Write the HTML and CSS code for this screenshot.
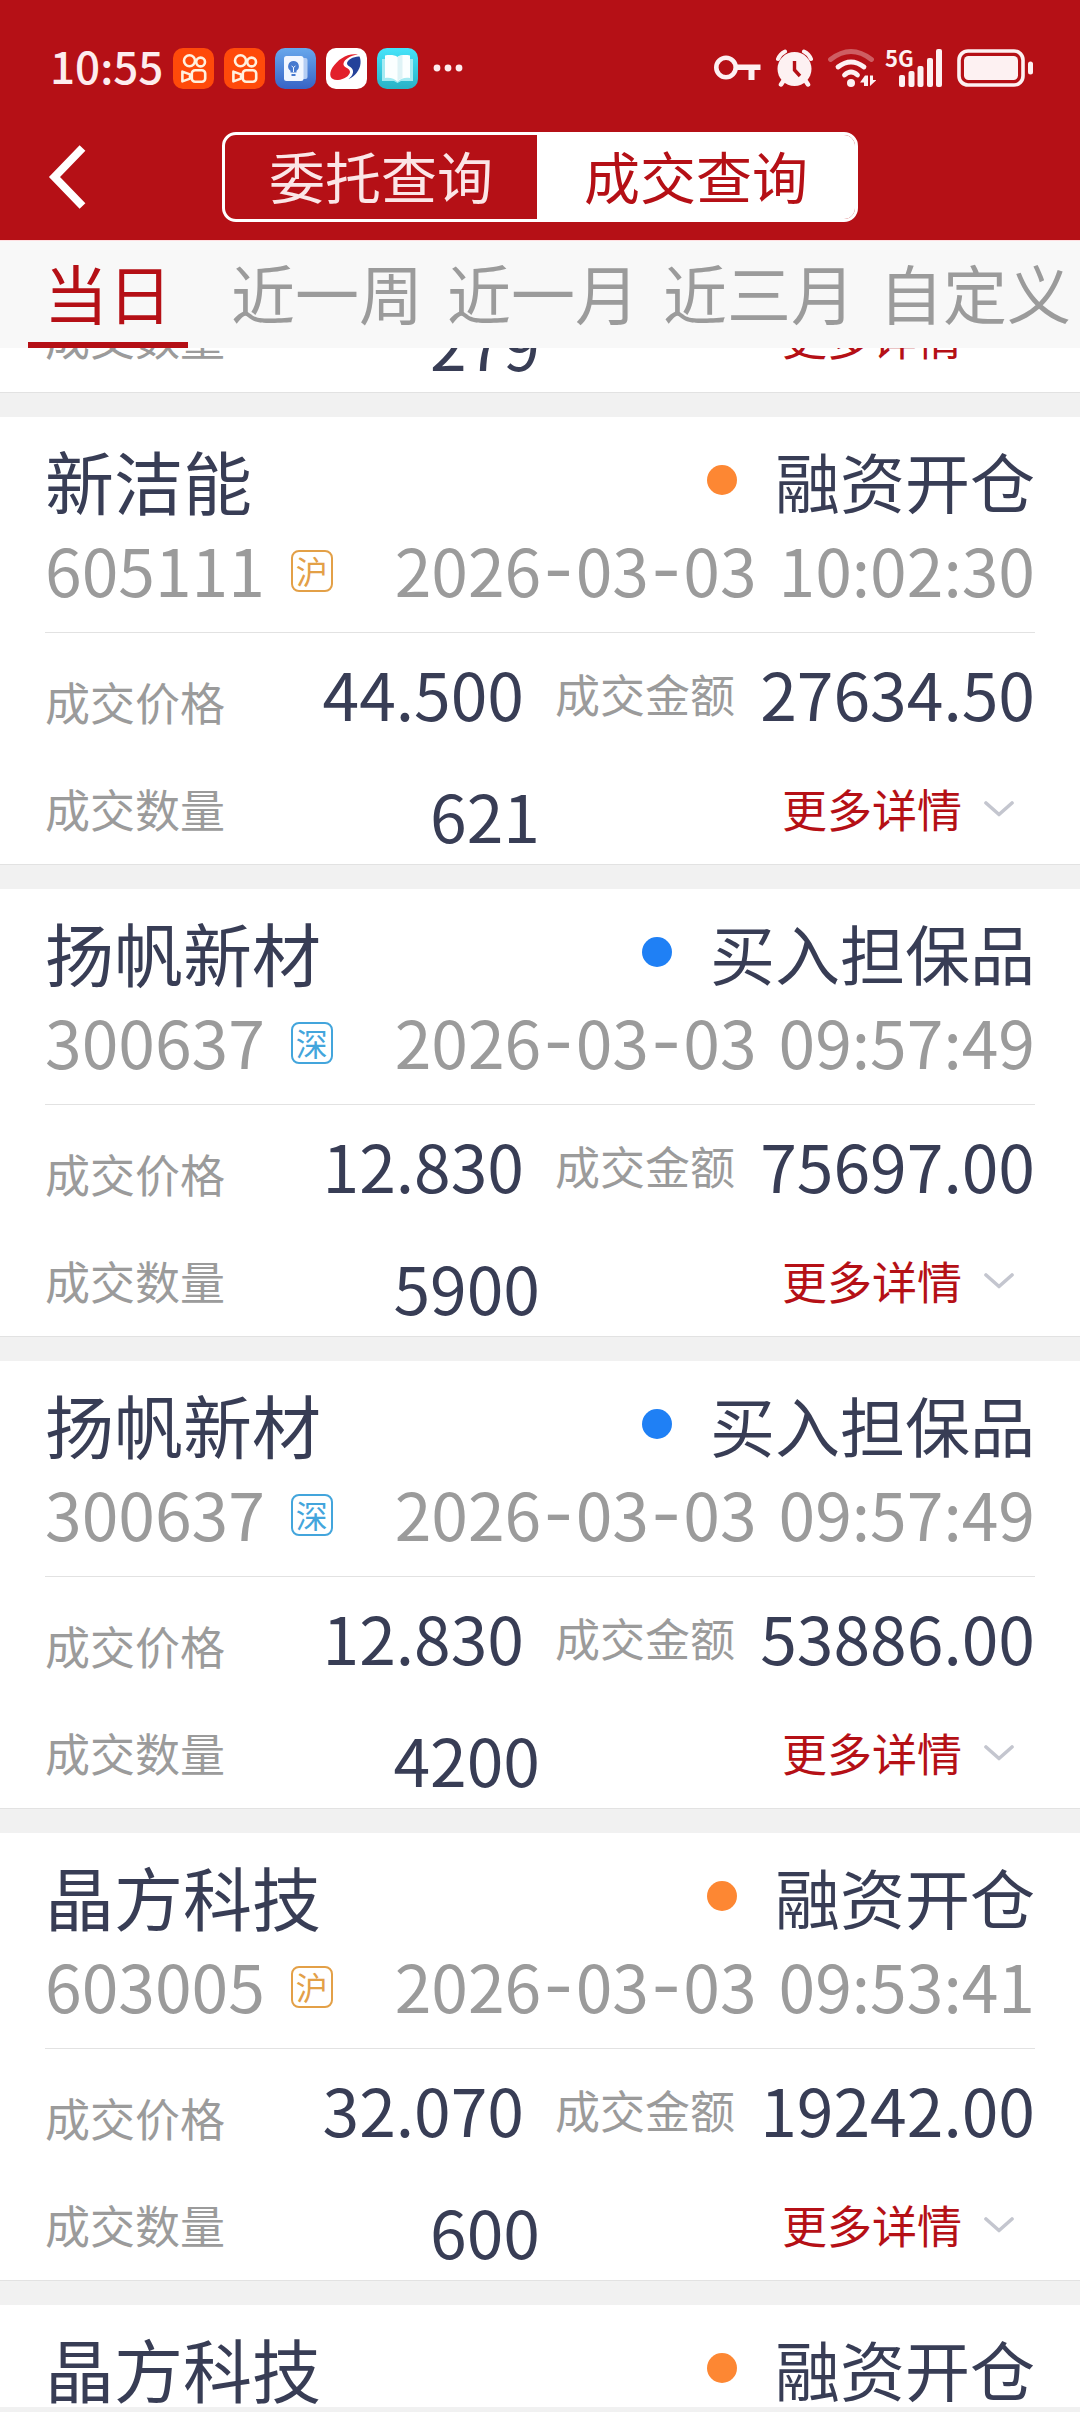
FILE: index.html
```html
<!DOCTYPE html>
<html lang="zh-CN">
<head>
<meta charset="utf-8">
<meta name="viewport" content="width=device-width, initial-scale=1">
<title>成交查询</title>
<link rel="stylesheet" href="styles.css">
</head>
<body>
<svg class="defs" width="0" height="0" aria-hidden="true">
  <defs>
    <linearGradient id="note-bg" x1="0" y1="0" x2="0" y2="1"><stop offset="0" stop-color="#68a8ec"/><stop offset="1" stop-color="#3763c6"/></linearGradient>
    <linearGradient id="book-bg" x1="0" y1="0" x2="0" y2="1"><stop offset="0" stop-color="#46e4fa"/><stop offset="1" stop-color="#29b2c6"/></linearGradient>
    <symbol id="camera" viewBox="0 0 41 41">
      <rect width="41" height="41" rx="10" fill="#ff4a0a"/>
      <g fill="none" stroke="#fff1df" stroke-width="2.6" stroke-linejoin="round">
        <circle cx="16.5" cy="12.7" r="5.5"/><circle cx="27.6" cy="14" r="4.4"/>
        <rect x="18.8" y="22.2" width="13.4" height="11.6" rx="3.4"/>
        <path d="M9.4 23.6 17 26.4V30.600L9.400 33.400Z"/>
      </g>
    </symbol>
    <symbol id="chevron" viewBox="0 0 30 16"><path d="M2 2 15 13.500 28 2" fill="none" stroke="#c4c6cf" stroke-width="3.6" stroke-linecap="round" stroke-linejoin="round"/></symbol>
  </defs>
</svg>
<div class="screen">
  <header class="header">
    <div class="status">
      <span class="clock">10:55</span>
      <div class="apps">
        <svg class="app" aria-hidden="true"><use href="#camera"/></svg>
        <svg class="app" aria-hidden="true"><use href="#camera"/></svg>
        <svg class="app" viewBox="0 0 41 41" aria-hidden="true">
          <rect width="41" height="41" rx="10" fill="url(#note-bg)"/>
          <path d="M28 10h2.500a2 2 0 0 1 2 2v17a2 2 0 0 1-2 2H28z" fill="#b4cdf4"/>
          <rect x="9" y="8" width="19.500" height="25" rx="2.500" fill="#f1f6ff"/>
          <path d="M18.500 13a5.300 5.300 0 0 0-3 9.700V24.500h6v-1.800a5.300 5.300 0 0 0-3-9.700zM16.500 26h4v2h-4z" fill="#4679cf"/>
          <path d="M16.600 18l1.900 1.500 1.900-1.500M18.500 19.500V24" fill="none" stroke="#f1f6ff" stroke-width="1"/>
        </svg>
        <svg class="app" viewBox="0 0 41 41" aria-hidden="true">
          <rect width="41" height="41" rx="10" fill="#fff"/>
          <path d="M32 6.500C22 4.500 12 11 6.500 19.500 2 27 4.500 32.500 12 32c6-.5 11.500-4 12-8 .3-4-7.500-4.500-6.500-8.500C18.300 11.500 24 7.500 32 6.500z" fill="#e2202b"/>
          <path d="M33.500 8.500C28 8 21 12 21 15.500c0 3 7 3.500 6 9-.4 2.500-2 4.500-4.500 6.500C29 28.500 34 22 34.500 15.500c.2-3-.1-5-1-7z" fill="#24429a"/>
        </svg>
        <svg class="app" viewBox="0 0 41 41" aria-hidden="true">
          <rect width="41" height="41" rx="10" fill="url(#book-bg)"/>
          <path d="M5 11h31v22H24l-3.500 2-3.500-2H5z" fill="#a4eaf2"/>
          <path d="M8 7.500c5-1 10-.5 12.500 1.500 2.500-2 7.500-2.500 12.500-1.500V30c-5-.8-9.500.5-12.500 3.500C17.500 30.500 13 29.200 8 30z" fill="#fbffff"/>
          <path d="M20.500 9v24.500c1.500-1.800 3-2.700 5-3.200V7.200c-2 .2-3.800.8-5 1.800z" fill="#dff3f6"/>
        </svg>
      </div>
      <svg class="dots" viewBox="0 0 30 8" aria-hidden="true"><g fill="#fdecee"><circle cx="4" cy="4" r="3.400"/><circle cx="15" cy="4" r="3.400"/><circle cx="26" cy="4" r="3.400"/></g></svg>
      <div class="system">
        <svg width="47" height="26" viewBox="0 0 47 26" aria-label="VPN"><circle cx="12" cy="12.500" r="9.700" fill="none" stroke="#fdf1f2" stroke-width="4.600"/><path d="M23 9.500H46.500V15H40.500V25H34.500V15H23z" fill="#fdf1f2"/></svg>
        <svg width="37" height="38" viewBox="0 0 37 38" aria-label="闹钟"><g stroke="#fdf1f2" fill="none" stroke-linecap="round"><path d="M2 10Q4 5 9 2.500M35 10Q33 5 28 2.500" stroke-width="4"/><path d="M8 31 5 35.500M29 31 32 35.500" stroke-width="4.500"/></g><circle cx="18.500" cy="20" r="17" fill="#fdf1f2"/><path d="M18.500 12V21L24 27" fill="none" stroke="#b51016" stroke-width="3.400"/></svg>
        <svg width="48" height="38" viewBox="0 0 48 38" aria-label="无线网络"><g fill="none" stroke="#fdf1f2" stroke-width="4.800" stroke-linecap="round"><path d="M2.500 10.500Q23 -5.500 43.500 10.500" opacity=".35"/><path d="M10 18Q23 8 36 18"/><path d="M16.500 26Q23 20 29.500 26"/></g><circle cx="23" cy="34" r="4" fill="#fdf1f2"/><path d="M37 26.500h3V37H36V33.500H32zM42 37V26.500H45V31H48.500z" fill="#fdf1f2"/></svg>
        <svg class="signal" width="56" height="38" viewBox="0 0 56 38" aria-label="信号"><text x="-1" y="18">5G</text><g fill="#fdf1f2"><rect x="13" y="26" width="6" height="12" rx="2"/><rect x="22.500" y="22" width="6" height="16" rx="2"/><rect x="31.500" y="17" width="6" height="21" rx="2"/><rect x="41" y="9" width="6" height="29" rx="2"/><rect x="50" y="0" width="6" height="38" rx="2"/></g></svg>
        <svg width="76" height="38" viewBox="0 0 76 38" aria-label="电量"><rect x="2" y="2" width="64" height="34" rx="9" fill="none" stroke="#fdf1f2" stroke-width="3.600"/><rect x="7" y="7" width="54" height="24" rx="4.500" fill="#fdf1f2"/><rect x="71" y="12.500" width="5" height="13" rx="2.500" fill="#fdf1f2"/></svg>
      </div>
    </div>
    <div class="navbar">
      <button class="back" type="button" aria-label="返回"><svg width="38" height="64" viewBox="0 0 38 64"><path d="M34.500 3 6.500 32 34.500 61" fill="none" stroke="#fff" stroke-width="8"/></svg></button>
      <div class="segments">
        <button class="segment" type="button">委托查询</button>
        <button class="segment segment-on" type="button">成交查询</button>
      </div>
    </div>
  </header>
  <nav class="tabs">
    <button class="tab tab-on" type="button">当日</button>
    <button class="tab" type="button">近一周</button>
    <button class="tab" type="button">近一月</button>
    <button class="tab" type="button">近三月</button>
    <button class="tab" type="button">自定义</button>
  </nav>
  <main class="list">
    <article class="card card-scrolled">
      <div class="row row-count">
        <div class="pair"><span class="label">成交数量</span><span class="value">279</span></div>
        <button class="more" type="button">更多详情<svg class="chevron"><use href="#chevron"/></svg></button>
      </div>
    </article>
    <article class="card">
      <div class="head">
        <div class="line"><h2 class="name">新洁能</h2><span class="kind kind-margin">融资开仓</span></div>
        <div class="line meta"><span>605111</span><span class="market market-sh">沪</span><time class="time"><span>2026<i>-</i>03<i>-</i>03</span> <span>10:02:30</span></time></div>
      </div>
      <div class="row row-price">
        <div class="pair"><span class="label">成交价格</span><span class="value">44.500</span></div>
        <div class="pair"><span class="label">成交金额</span><span class="value">27634.50</span></div>
      </div>
      <div class="row row-count">
        <div class="pair"><span class="label">成交数量</span><span class="value">621</span></div>
        <button class="more" type="button">更多详情<svg class="chevron"><use href="#chevron"/></svg></button>
      </div>
    </article>
    <article class="card">
      <div class="head">
        <div class="line"><h2 class="name">扬帆新材</h2><span class="kind kind-buy">买入担保品</span></div>
        <div class="line meta"><span>300637</span><span class="market market-sz">深</span><time class="time"><span>2026<i>-</i>03<i>-</i>03</span> <span>09:57:49</span></time></div>
      </div>
      <div class="row row-price">
        <div class="pair"><span class="label">成交价格</span><span class="value">12.830</span></div>
        <div class="pair"><span class="label">成交金额</span><span class="value">75697.00</span></div>
      </div>
      <div class="row row-count">
        <div class="pair"><span class="label">成交数量</span><span class="value">5900</span></div>
        <button class="more" type="button">更多详情<svg class="chevron"><use href="#chevron"/></svg></button>
      </div>
    </article>
    <article class="card">
      <div class="head">
        <div class="line"><h2 class="name">扬帆新材</h2><span class="kind kind-buy">买入担保品</span></div>
        <div class="line meta"><span>300637</span><span class="market market-sz">深</span><time class="time"><span>2026<i>-</i>03<i>-</i>03</span> <span>09:57:49</span></time></div>
      </div>
      <div class="row row-price">
        <div class="pair"><span class="label">成交价格</span><span class="value">12.830</span></div>
        <div class="pair"><span class="label">成交金额</span><span class="value">53886.00</span></div>
      </div>
      <div class="row row-count">
        <div class="pair"><span class="label">成交数量</span><span class="value">4200</span></div>
        <button class="more" type="button">更多详情<svg class="chevron"><use href="#chevron"/></svg></button>
      </div>
    </article>
    <article class="card">
      <div class="head">
        <div class="line"><h2 class="name">晶方科技</h2><span class="kind kind-margin">融资开仓</span></div>
        <div class="line meta"><span>603005</span><span class="market market-sh">沪</span><time class="time"><span>2026<i>-</i>03<i>-</i>03</span> <span>09:53:41</span></time></div>
      </div>
      <div class="row row-price">
        <div class="pair"><span class="label">成交价格</span><span class="value">32.070</span></div>
        <div class="pair"><span class="label">成交金额</span><span class="value">19242.00</span></div>
      </div>
      <div class="row row-count">
        <div class="pair"><span class="label">成交数量</span><span class="value">600</span></div>
        <button class="more" type="button">更多详情<svg class="chevron"><use href="#chevron"/></svg></button>
      </div>
    </article>
    <article class="card">
      <div class="head">
        <div class="line"><h2 class="name">晶方科技</h2><span class="kind kind-margin">融资开仓</span></div>
      </div>
    </article>
  </main>
</div>
</body>
</html>
```
FILE: styles.css
```css
* { box-sizing: border-box; }

body {
  margin: 0;
  background: #f1f1f1;
  color: #383d55;
  font-family: "Noto Sans CJK SC", "Noto Sans", sans-serif;
}

button {
  margin: 0;
  padding: 0;
  border: 0;
  background: none;
  color: inherit;
  font-family: inherit;
}

svg { display: block; flex: none; }

.defs { position: absolute; }

.screen {
  display: flex;
  flex-direction: column;
  height: 100vh;
  padding-bottom: 5px;
}

/* Header */
.header {
  flex: none;
  background: #b51016;
  color: #fff;
}

.status {
  display: flex;
  align-items: center;
  height: 124px;
  padding: 12px 47px 0 50px;
}

.clock {
  width: 123px;
  padding-bottom: 6px;
  color: #fdecee;
  font-size: 44px;
  font-weight: 500;
  line-height: 56px;
}

.apps { display: flex; gap: 10px; }
.app { width: 41px; height: 41px; }
.dots { width: 30px; height: 8px; margin-left: 15px; }

.system {
  display: flex;
  align-items: center;
  gap: 15px;
  margin-left: auto;
}

.signal { margin-left: -5px; overflow: visible; }
.signal text {
  fill: #fdf1f2;
  font-family: "Noto Sans CJK SC", sans-serif;
  font-size: 22px;
  font-weight: 700;
}

.navbar {
  display: grid;
  grid-template-columns: 1fr 636px 1fr;
  align-items: center;
  height: 116px;
  padding-bottom: 10px;
}

.back { justify-self: start; margin-left: 48px; }

.segments {
  display: grid;
  grid-template-columns: 312px 1fr;
  height: 90px;
  border: 3px solid #fff;
  border-radius: 14px;
  overflow: hidden;
}

.segment {
  padding-bottom: 4px;
  color: #fbe6e7;
  font-size: 56px;
  line-height: 80px;
}

.segment-on { background: #fff; color: #b51016; }

/* Period tabs */
.tabs {
  position: relative;
  z-index: 1;
  flex: none;
  display: grid;
  grid-template-columns: repeat(5, 1fr);
  height: 108px;
  border-top: 1px solid #ffdfe1;
  background: #f8f8f8;
}

.tab {
  display: flex;
  flex-direction: column;
  align-items: center;
  justify-content: space-between;
  padding-left: 6px;
  color: #9b9b9b;
  font-size: 64px;
  line-height: 100px;
  white-space: nowrap;
}

.tab-on { padding-left: 0; color: #b51016; }
.tab-on::after {
  content: "";
  width: 160px;
  height: 6px;
  background: #b51016;
}

/* Trade list */
.list {
  flex: 1;
  min-height: 0;
  overflow: hidden;
}

.card {
  margin-bottom: 24px;
  padding: 0 45px;
  border-bottom: 1px solid #e2e2e2;
  background: #fff;
}

.card-scrolled { margin-top: -68px; }

.head {
  padding: 19px 0 20px;
  border-bottom: 1px solid #e2e2e2;
}

.line {
  display: flex;
  align-items: center;
  height: 88px;
}

.name {
  margin: 0;
  font-size: 69px;
  font-weight: 400;
  line-height: 88px;
}

.kind {
  display: flex;
  align-items: center;
  gap: 38px;
  margin-left: auto;
  font-size: 65px;
  line-height: 88px;
}

.kind::before {
  content: "";
  width: 30px;
  height: 30px;
  border-radius: 50%;
}

.kind-margin::before { background: #fd8733; }
.kind-buy::before { background: #1f80f5; }

.meta {
  color: #9b9b9b;
  font-size: 66px;
  line-height: 88px;
}

.market {
  width: 42px;
  height: 42px;
  margin: 6px 0 0 26px;
  border: 2px solid;
  border-radius: 8px;
  font-size: 32px;
  line-height: 36px;
  text-align: center;
}

.market-sh { color: #e3a047; }
.market-sz { color: #43a5dc; }

.time {
  display: flex;
  gap: 22px;
  margin-left: auto;
  white-space: nowrap;
}

.time i {
  padding: 0 2px;
  font-family: Inter, sans-serif;
  font-style: normal;
  font-feature-settings: "case";
  line-height: 1;
}

.row {
  display: grid;
  grid-template-columns: 1fr 1fr;
}

.row-price { height: 119px; }
.row-count { height: 112px; padding-top: 2px; }

.pair {
  display: flex;
  align-items: center;
  justify-content: space-between;
}

.label {
  color: #9b9b9b;
  font-size: 45px;
  line-height: 64px;
}

.value {
  font-size: 66px;
  line-height: 88px;
}

.row-price .value { padding-bottom: 2px; }
.row-price .label { padding-top: 2px; }
.row-price .pair:first-child { padding-right: 16px; }
.row-price .pair:first-child .label { padding-top: 18px; }
.row-price .pair:last-child { padding-left: 15px; }
.row-count .value { padding-top: 10px; }

.more {
  display: flex;
  align-items: center;
  justify-content: flex-end;
  gap: 22px;
  padding-right: 21px;
  color: #b51016;
  font-size: 45px;
  line-height: 64px;
}

.chevron { width: 30px; height: 16px; }
```
